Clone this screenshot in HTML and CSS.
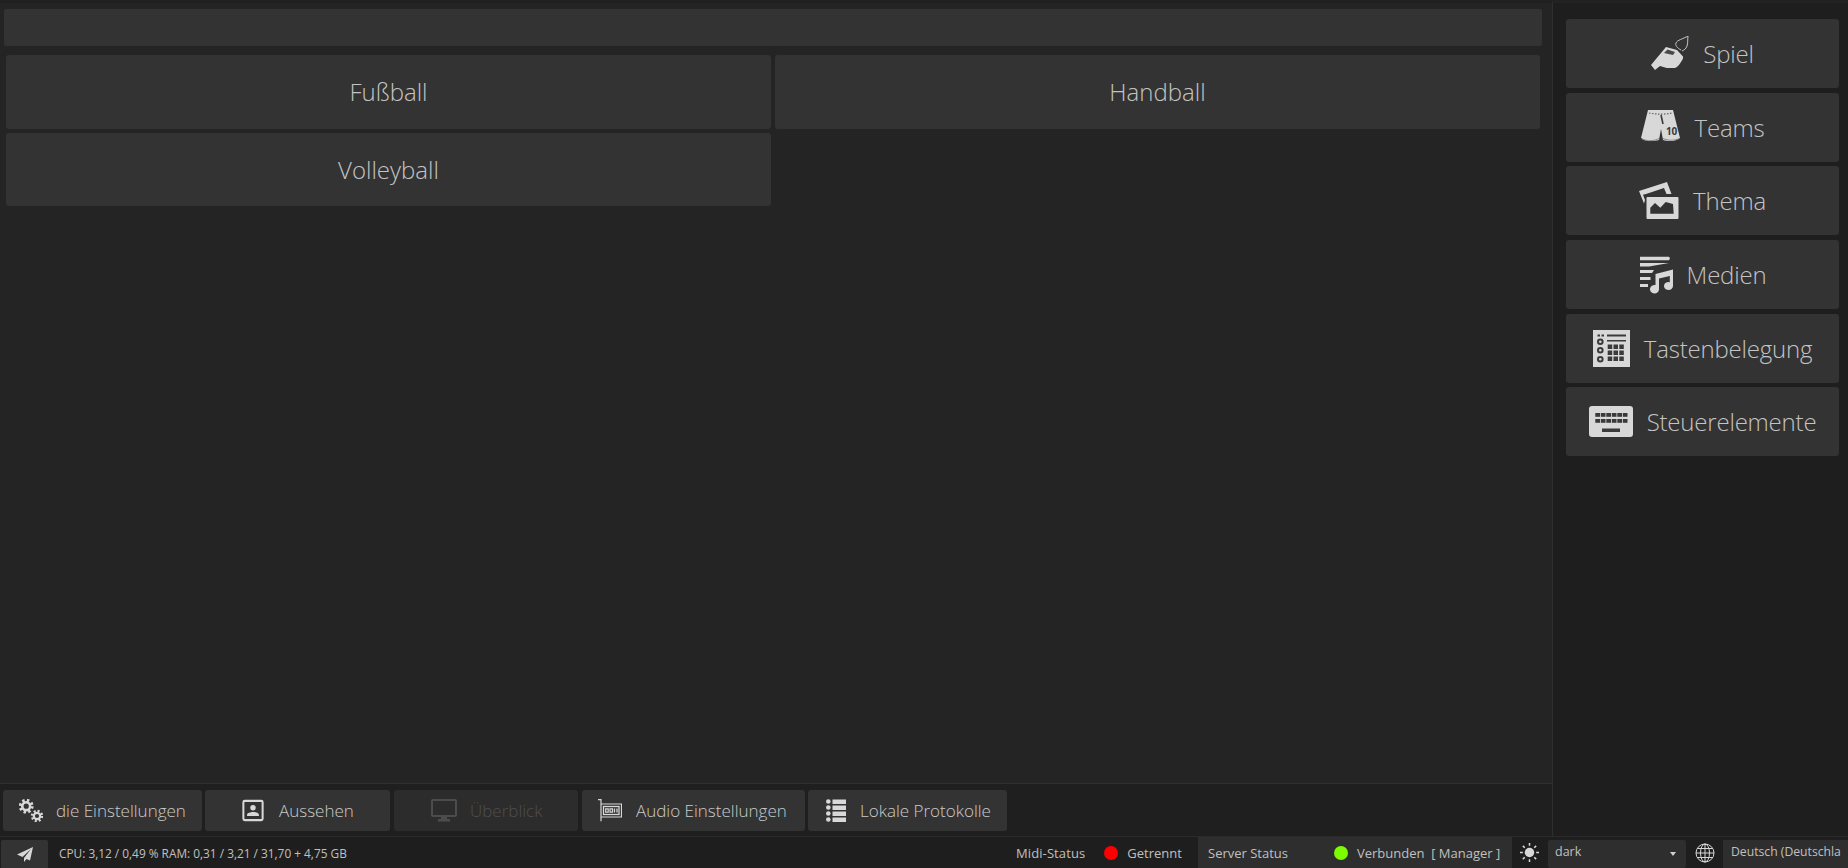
FILE: index.html
```html
<!DOCTYPE html>
<html lang="de">
<head>
<meta charset="utf-8">
<title>Scoreboard</title>
<link rel="stylesheet" href="styles.css">
</head>
<body>
<div class="app">
  <div class="upper">
    <main class="main">
      <div class="content">
        <div class="titlebar"></div>
        <div class="sports">
          <button class="sport">Fußball</button>
          <button class="sport">Handball</button>
          <button class="sport">Volleyball</button>
        </div>
      </div>
      <nav class="toolbar">
        <button class="tool t1"><svg class="ti" viewBox="0 0 24 23"><g fill="none" stroke="#d8d8d8"><circle cx="7.200" cy="7.200" r="5.800" stroke-width="3.200" stroke-dasharray="2.300 2.257"/><circle cx="7.200" cy="7.200" r="3.900" stroke-width="2.600"/><circle cx="18" cy="17" r="4.800" stroke-width="2.800" stroke-dasharray="1.900 1.870"/><circle cx="18" cy="17" r="3.200" stroke-width="2.200"/></g></svg><span>die Einstellungen</span></button>
        <button class="tool t2"><svg class="ti ti22" viewBox="0 0 24 24"><rect x="1.500" y="1.500" width="21" height="21" rx="1.500" fill="none" stroke="#d8d8d8" stroke-width="2.200"/><circle cx="12" cy="9" r="3" fill="#d8d8d8"/><path fill="#d8d8d8" d="M5.500 18v-1.500c0-2 4-3 6.500-3s6.500 1 6.500 3V18z"/></svg><span>Aussehen</span></button>
        <button class="tool t3" disabled><svg class="ti ti26" viewBox="0 0 26 23"><rect x="1" y="1" width="24" height="16" rx="1" fill="none" stroke="#4c4c4c" stroke-width="2"/><path fill="#4c4c4c" d="M10 17h6v3h3v2.500H7V20h3z"/></svg><span>Überblick</span></button>
        <button class="tool t4"><svg class="ti" viewBox="0 0 24 23"><path fill="none" stroke="#d8d8d8" stroke-width="1.200" d="M0 .700h3v21.500M3 5h20.500v13H3"/><rect x="5.500" y="7.500" width="15.500" height="8" fill="none" stroke="#d8d8d8" stroke-width="1.300"/><path fill="none" stroke="#d8d8d8" stroke-width="1.200" d="M7.700 9.800h2.500v3.400H7.700zM12 9.800h2.500v3.400H12z"/><path stroke="#d8d8d8" stroke-width="1.300" d="M16.500 9.500v4M19 9.500v4"/></svg><span>Audio Einstellungen</span></button>
        <button class="tool t5"><svg class="ti ti20" viewBox="0 0 20 23"><g fill="#d8d8d8"><circle cx="2.300" cy="2.500" r="2.300"/><circle cx="2.300" cy="8.500" r="2.300"/><circle cx="2.300" cy="14.500" r="2.300"/><circle cx="2.300" cy="20.500" r="2.300"/><rect x="6.500" y=".5" width="13.500" height="4.500"/><rect x="6.500" y="6.500" width="13.500" height="4.500"/><rect x="6.500" y="12.500" width="13.500" height="4.500"/><rect x="6.500" y="18.500" width="13.500" height="4.500"/></g></svg><span>Lokale Protokolle</span></button>
      </nav>
    </main>
    <aside class="sidebar">
      <button class="nav"><svg class="ni whistle" viewBox="0 0 38 36"><path fill="#d8d8d8" d="M0 29 15 11l11 3 6 6.500c.5 2-1 4-2 5.500-2 3-4 5.500-6 6h-8.300L9 30l-5 4z"/><path fill="#4a4a4a" d="M13 17l3.500-3.500 7.500 2.500-2 3z"/><path fill="none" stroke="#c8c8c8" stroke-width="1" d="M30 14c-4-2-6-5-5-7 1-3 7-4 12-7-.5 4 0 7-1 10-1 3-3 4-5 5"/></svg><span>Spiel</span></button>
      <button class="nav"><svg class="ni shorts" viewBox="0 0 40 36"><path fill="#d8d8d8" d="M7 1h25l7 28-5 2.500c-4 1-9 .5-12-.5L20 20l-2 11c-4 1-9 1.500-13 .5L0 29z"/><path stroke="#666" stroke-width="1.200" stroke-dasharray="1.500 1.500" fill="none" d="M8 4c8 1.500 16 1.500 23 0"/><path stroke="#3a3a3a" stroke-width="1.600" fill="none" d="M20 6l2 9"/><path stroke="#8a8a8a" stroke-width="1" fill="none" d="M1 30c5 2.500 13 2 17-.5M22 29.500c5 2.500 12 2 16.500 0"/><text x="25" y="25.500" class="num">10</text></svg><span>Teams</span></button>
      <button class="nav"><svg class="ni photos" viewBox="0 0 40 38"><path fill="#d8d8d8" d="M0 9 28 0l4.500 12h-5L25 6 7 12l-3 .8 2 5.200-1 3.500z"/><rect x="7.500" y="15" width="32" height="22" rx="1" fill="#d8d8d8"/><path fill="#333" d="M11.300 31.700v-6L16 21l5.300 4.700L26.700 20l7.300 2 .7 9.700z"/></svg><span>Thema</span></button>
      <button class="nav"><svg class="ni media" viewBox="0 0 34 38"><g fill="#d8d8d8"><path d="M1 .7h29l1 1.500-1 2H1zM1 7h29l-20 3.500H1zM1 14h14l-2 3H1zM1 21h10.500v3H1zM1 28h8v3H1z"/><path d="M16.500 18 34 13.500V30a4.500 4 0 1 1-3.200-3.800V20L20 22.500V33a4.500 4.300 0 1 1-3.500-4z"/></g></svg><span>Medien</span></button>
      <button class="nav"><svg class="ni keys" viewBox="0 0 37 37"><rect width="37" height="37" fill="#d8d8d8"/><g fill="#3a3a3a"><rect x="4.500" y="4.500" width="2.500" height="2"/><rect x="8.500" y="4.500" width="2.500" height="2"/><rect x="14" y="4.500" width="19" height="2"/><rect x="14" y="10" width="19" height="1.500"/><rect x="14.700" y="14.500" width="4.500" height="4.500"/><rect x="20.500" y="14.500" width="4.500" height="4.500"/><rect x="26.300" y="14.500" width="4.500" height="4.500"/><rect x="14.700" y="20.500" width="4.500" height="4.500"/><rect x="20.500" y="20.500" width="4.500" height="4.500"/><rect x="26.300" y="20.500" width="4.500" height="4.500"/><rect x="14.700" y="26.500" width="4.500" height="4.500"/><rect x="20.500" y="26.500" width="4.500" height="4.500"/><rect x="26.300" y="26.500" width="4.500" height="4.500"/></g><g fill="none" stroke="#3a3a3a" stroke-width="2"><circle cx="7.300" cy="11.700" r="2.300"/><circle cx="7.300" cy="20.300" r="2.300"/><circle cx="7.300" cy="29.300" r="2.300"/></g></svg><span>Tastenbelegung</span></button>
      <button class="nav"><svg class="ni board" viewBox="0 0 44 31"><rect width="44" height="31" rx="3" fill="#d8d8d8"/><g fill="#3a3a3a"><rect x="6.300" y="7" width="4.700" height="3.800"/><rect x="11.800" y="7" width="4.700" height="3.800"/><rect x="17.300" y="7" width="4.700" height="3.800"/><rect x="22.800" y="7" width="4.700" height="3.800"/><rect x="28.300" y="7" width="4.700" height="3.800"/><rect x="33.800" y="7" width="4.700" height="3.800"/><rect x="6.300" y="13" width="4.700" height="3.800"/><rect x="11.800" y="13" width="4.700" height="3.800"/><rect x="17.300" y="13" width="4.700" height="3.800"/><rect x="22.800" y="13" width="4.700" height="3.800"/><rect x="28.300" y="13" width="4.700" height="3.800"/><rect x="33.800" y="13" width="4.700" height="3.800"/><rect x="13" y="22.500" width="18" height="3.500"/></g></svg><span>Steuerelemente</span></button>
    </aside>
  </div>
  <footer class="status">
    <button class="send"><svg class="si" viewBox="0 0 16 15"><path fill="#d8d8d8" d="M16 0 0 7.500 5.500 10 14 2 7 11v4l2.500-3 3.500 1.500z"/></svg></button>
    <span class="metrics">CPU: 3,12 / 0,49 % RAM: 0,31 / 3,21 / 31,70 + 4,75 GB</span>
    <div class="midi"><span class="lbl">Midi-Status</span><i class="dot red"></i><span>Getrennt</span></div>
    <div class="server"><span class="lbl">Server Status</span><i class="dot green"></i><span class="conn">Verbunden&nbsp; [ Manager ]</span></div>
    <svg class="sun" viewBox="0 0 20 20"><circle cx="10" cy="10" r="5" fill="#d8d8d8"/><path stroke="#d8d8d8" stroke-width="1.600" d="M10 0v3M10 17v3M0 10h3M17 10h3M3 3l2 2M15 15l2 2M17 3l-2 2M5 15l-2 2"/></svg>
    <div class="select"><span>dark</span><i class="caret"></i></div>
    <svg class="globe" viewBox="0 0 20 20"><g fill="none" stroke="#d8d8d8" stroke-width="1"><circle cx="10" cy="10" r="9"/><ellipse cx="10" cy="10" rx="4.500" ry="9"/><path d="M10 1v18M1 10h18M2.500 5.500h15M2.500 14.500h15"/></g></svg>
    <div class="lang"><span>Deutsch (Deutschla</span></div>
  </footer>
</div>
</body>
</html>
```
FILE: styles.css
```css
* { box-sizing: border-box; }
html, body { margin: 0; height: 100%; }
body { background: #242425; font-family: "Open Sans", "Noto Sans", sans-serif; color: #d0d0d0; overflow: hidden; }
button { font-family: inherit; border: 0; color: inherit; padding: 0; margin: 0; }
.app { display: flex; flex-direction: column; height: 868px; width: 1848px; }
.upper { display: flex; height: 836px; }
.main { width: 1552px; display: flex; flex-direction: column; border-top: 3px solid #202020; }
.content { flex: 1; padding: 6px 10px 0 4px; }
.titlebar { height: 37px; background: #333; border-radius: 2px; width: 1538px; }
.sports { display: grid; grid-template-columns: 765px 765px; column-gap: 4px; row-gap: 4px; margin: 9px 0 0 2px; grid-auto-rows: 73.500px; }
.sport { background: #333; border-radius: 3px; font-size: 24px; font-weight: 300; color: #c4c4c4; }
.toolbar { height: 53px; border-top: 1px solid #2f2f2f; background: #1f1f20; padding: 6px 3px 0; display: flex; align-items: flex-start; }
.tool { height: 41px; background: #333; border-radius: 3px; font-size: 17px; font-weight: 300; color: #cacaca; display: flex; align-items: center; flex: none; white-space: nowrap; }
.tool:disabled { color: #4e4e4e; background: #2c2c2d; }
.ti { height: 23px; width: 24px; flex: none; }
.ti22 { width: 22px; }
.ti26 { width: 26px; }
.ti20 { width: 20px; }
.t1 { width: 199px; padding-left: 16px; gap: 13px; }
.t2 { width: 185px; padding-left: 37px; gap: 15px; margin-left: 3px; }
.t3 { width: 184px; padding-left: 37px; gap: 13px; margin-left: 4px; }
.t4 { width: 223px; padding-left: 16px; gap: 14px; margin-left: 4px; }
.t5 { width: 199px; padding-left: 18px; gap: 14px; margin-left: 3px; }
.sidebar { flex: 1; border-left: 1px solid #2e2e2e; background: #1e1e1e; padding: 16px 9px 0 13px; display: flex; flex-direction: column; gap: 4.700px; border-top: 3px solid #222; }
.nav { height: 69px; flex: none; background: #333; border-radius: 3px; font-size: 24px; font-weight: 300; letter-spacing: -.2px; color: #c4c4c4; display: flex; align-items: center; justify-content: center; gap: 14px; }
.nav span { white-space: nowrap; }
.ni { flex: none; }
.whistle { width: 38px; height: 36px; }
.shorts { width: 40px; height: 36px; }
.photos { width: 40px; height: 38px; }
.media { width: 34px; height: 38px; }
.keys { width: 37px; height: 37px; }
.board { width: 44px; height: 31px; }
.num { font: 700 10px "Open Sans", sans-serif; fill: #3a3a3a; }
.status { height: 32px; background: #1e1e1e; display: flex; align-items: center; font-size: 13px; color: #c0c0c0; border-top: 1px solid #2a2a2a; }
.send { width: 47px; height: 29px; margin: 3px 0 0 1px; background: #333; border-radius: 2px; display: flex; align-items: center; justify-content: center; flex: none; }
.si { width: 16px; height: 15px; }
.metrics { font-size: 11.850px; margin-left: 11px; width: 957px; flex: none; white-space: nowrap; }
.midi { display: flex; align-items: center; width: 182px; flex: none; height: 100%; }
.midi .lbl { white-space: nowrap; letter-spacing: .1px; }
.dot { width: 14px; height: 14px; border-radius: 50%; display: block; flex: none; }
.red { background: #f00; margin: 0 9px 0 19px; }
.green { background: #7cfc00; margin: 0 9px 0 47px; }
.server { display: flex; align-items: center; width: 314px; height: 100%; background: #2e2e2e; padding-left: 10px; flex: none; }
.server .lbl { width: 79px; white-space: nowrap; }
.conn { white-space: nowrap; }
.sun { width: 19px; height: 19px; margin: 0 9px 0 8px; flex: none; }
.select { width: 138px; height: 28px; margin-top: 2px; background: #2e2e2e; border-radius: 2px; display: flex; align-items: center; justify-content: space-between; padding: 0 5px 4px 7px; flex: none; font-size: 12.500px; }
.caret { width: 0; height: 0; border: 3.500px solid transparent; border-top: 4px solid #d0d0d0; border-bottom: 0; margin: 5px 5px 0 0; }
.globe { width: 20px; height: 20px; margin: 0 8px 0 9px; flex: none; }
.lang { flex: 1; min-width: 0; height: 28px; margin-top: 2px; background: #2e2e2e; display: flex; padding: 3px 0 0 8px; overflow: hidden; font-size: 12.200px; white-space: nowrap; }
```
